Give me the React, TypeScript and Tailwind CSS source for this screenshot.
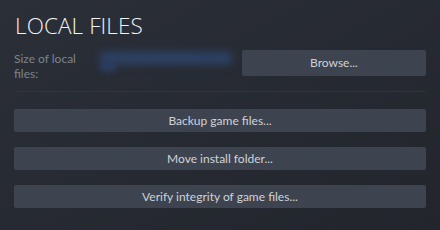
import React from 'react';

const actions = ['Backup game files...', 'Move install folder...', 'Verify integrity of game files...'];

const SteamButton: React.FC<{ label: string; className?: string }> = ({ label, className = '' }) => (
  <button
    type="button"
    className={`flex items-center justify-center rounded-[2px] bg-[#3d4450] text-[12px] text-[#cfd2d6] hover:bg-[#4a5260] ${className}`}
  >
    {label}
  </button>
);

const App: React.FC = () => {
  return (
    <div
      className="h-[230px] w-[440px] overflow-hidden bg-gradient-to-br from-[#2b2f38] to-[#22252c] px-[14px] pt-[13px]"
      style={{ fontFamily: 'Lato, "Liberation Sans", sans-serif' }}
    >
      <h1
        className="pl-[1px] text-[22.5px] font-light leading-[26px] tracking-[0.1px] text-[#f2f3f4]"
        style={{ fontFamily: '"Open Sans", "Liberation Sans", sans-serif' }}
      >
        LOCAL FILES
      </h1>

      <div className="mt-[11px] flex h-[26px] items-start">
        <div className="w-[84px] pt-[1px] text-[12px] leading-[15px] text-[#7e848c]">
          Size of local
          <br />
          files:
        </div>
        {/* obscured size value */}
        <div className="relative h-[24px] w-[144px]">
          <div className="absolute left-[2px] top-[2px] h-[12px] w-[132px] rounded-sm bg-[#2d4369] blur-[4px]" />
          <div className="absolute left-[2px] top-[12px] h-[9px] w-[16px] rounded-sm bg-[#2b4066] blur-[3px]" />
        </div>
        <SteamButton label="Browse..." className="h-[26px] flex-1" />
      </div>

      <div className="mt-[15px] h-px bg-[#30343c]" />

      <div className="mt-[17px] flex flex-col gap-[15px]">
        {actions.map((a) => (
          <SteamButton key={a} label={a} className="h-[23px] w-full" />
        ))}
      </div>
    </div>
  );
};

export default App;
